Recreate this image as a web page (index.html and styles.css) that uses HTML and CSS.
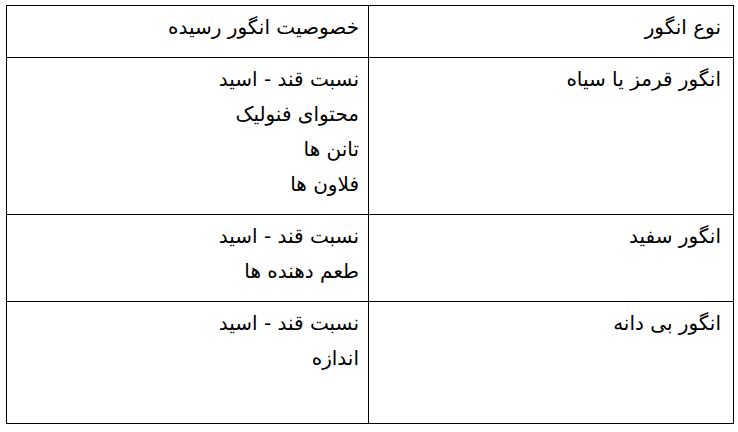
FILE: index.html
```html
<!DOCTYPE html>
<html lang="fa" dir="rtl">
<head>
<meta charset="utf-8">
<link rel="stylesheet" href="styles.css">
</head>
<body>
<table class="grape-table">
  <colgroup>
    <col class="col-type">
    <col class="col-feature">
  </colgroup>
  <tr class="row-head">
    <td>نوع انگور</td>
    <td>خصوصیت انگور رسیده</td>
  </tr>
  <tr>
    <td>انگور قرمز یا سیاه</td>
    <td>نسبت قند - اسید<br>محتوای فنولیک<br>تانن ها<br>فلاون ها</td>
  </tr>
  <tr>
    <td>انگور سفید</td>
    <td>نسبت قند - اسید<br>طعم دهنده ها</td>
  </tr>
  <tr>
    <td>انگور بی دانه</td>
    <td>نسبت قند - اسید<br>اندازه<br>&nbsp;</td>
  </tr>
</table>
</body>
</html>
```
FILE: styles.css
```css
html, body {
  margin: 0;
  background: #fff;
}
body {
  padding: 5px 4px 0 8px;
  font-family: "DejaVu Sans", sans-serif;
  color: #000;
}
.grape-table {
  border-collapse: collapse;
  table-layout: fixed;
  width: 727px;
  font-size: 20px;
  line-height: 35px;
}
.col-type { width: 365px; }
.col-feature { width: 362px; }
.grape-table td {
  border: 1px solid #000;
  vertical-align: top;
  text-align: right;
  padding: 4px 12px 12px 8px;
}
.grape-table td + td {
  padding-right: 9px;
}
```
